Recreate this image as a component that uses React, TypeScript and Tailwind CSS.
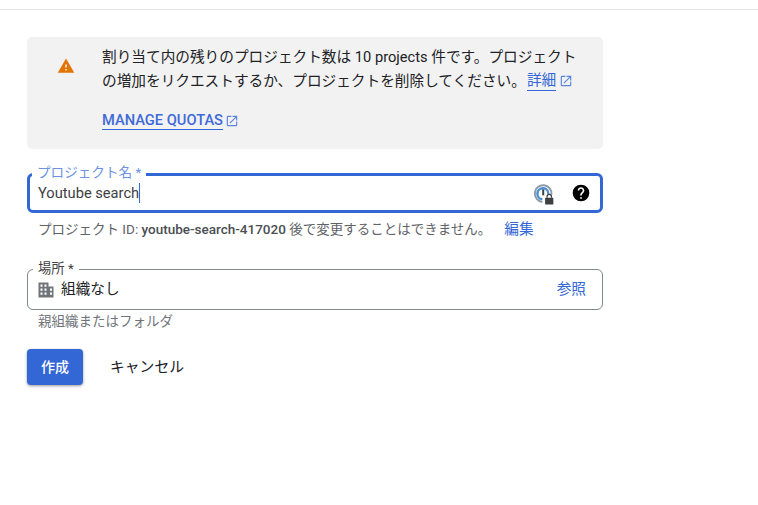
import React from "react";

function ExtLink({ className }: { className?: string }) {
  return (
    <svg viewBox="0 0 24 24" className={className} fill="currentColor">
      <path d="M19 19H5V5h6V3H5a2 2 0 0 0-2 2v14a2 2 0 0 0 2 2h14a2 2 0 0 0 2-2v-6h-2v6zM13 3v2h4.59L7.76 14.83l1.41 1.41L19 6.41V11h2V3h-8z" />
    </svg>
  );
}

export default function App() {
  return (
    <div className="w-[758px] h-[505px] bg-white overflow-hidden font-['Roboto','Noto_Sans_CJK_JP',sans-serif] text-[#202124]">
      <div className="h-[10px] border-b border-[#e5e5e5]" />
      <div className="ml-[27px] w-[576px] pt-[27px]">
        <div className="h-[112px] bg-[#f2f2f2] rounded-[5px] flex">
          <div className="w-[75px] shrink-0 flex justify-center pt-[20px] pl-[2px]">
            <svg viewBox="0 0 24 24" className="w-[18px] h-[18px] text-[#e37400]" fill="currentColor">
              <path d="M1 21h22L12 2 1 21zm12-3h-2v-2h2v2zm0-4h-2v-4h2v4z" />
            </svg>
          </div>
          <div className="pt-[8px] text-[14.67px] leading-[24px] text-[#202124] w-[490px]">
            <div className="whitespace-nowrap">割り当て内の残りのプロジェクト数は 10 projects 件です。プロジェクト</div>
            <div className="whitespace-nowrap flex items-center">
              <span>の増加をリクエストするか、プロジェクトを削除してください。</span>
              <span className="text-[#3367d6] border-b border-[#3367d6] leading-[19px] ml-[1px]">詳細</span>
              <ExtLink className="w-[14px] h-[14px] ml-[3px] text-[#5c85de]" />
            </div>
            <div className="flex items-center mt-[18px]">
              <span className="text-[14.67px] font-medium text-[#3f6ad8] border-b border-[#3367d6] leading-[18px]">MANAGE QUOTAS</span>
              <ExtLink className="w-[14px] h-[14px] ml-[2px] text-[#5c85de]" />
            </div>
          </div>
        </div>

        <div className="relative mt-[24px] h-[40px] border-[3px] border-[#3367d6] rounded-[6px] flex items-center pl-[8px] pr-[9px]">
          <span className="absolute left-[2px] top-[-13px] bg-white px-[5px] text-[13.6px] leading-[18px] text-[#6c93e4]">プロジェクト名 *</span>
          <span className="text-[14.67px] leading-[20px] text-[#3c4043] border-r border-[#3367d6]">Youtube search</span>
          <div className="ml-auto flex items-center gap-[16px] mb-[1px]">
            <svg viewBox="0 0 20 20" className="w-[22px] h-[22px] mt-[2px]">
              <path d="M16.8 10.5A7.6 7.6 0 1 0 8.5 17.2" fill="none" stroke="#8f9ba6" strokeWidth="1.8" />
              <path d="M14 10A5 5 0 1 0 8.5 14.8" fill="none" stroke="#4a90d9" strokeWidth="2.2" />
              <rect x="8.4" y="5.8" width="1.8" height="5.4" fill="#3c4043" />
              <rect x="11" y="13.5" width="7.5" height="6" rx="0.5" fill="#3c4043" />
              <path d="M12.8 13.5v-1.2a2 2 0 0 1 4 0v1.2" fill="none" stroke="#3c4043" strokeWidth="1.1" />
            </svg>
            <svg viewBox="0 0 24 24" className="w-[20px] h-[20px] text-black" fill="currentColor">
              <path d="M12 2a10 10 0 1 0 0 20 10 10 0 0 0 0-20zm1 17h-2v-2h2v2zm2.07-7.75-.9.92C13.45 12.9 13 13.5 13 15h-2v-.5c0-1.1.45-2.1 1.17-2.83l1.24-1.26c.37-.36.59-.86.59-1.41 0-1.1-.9-2-2-2s-2 .9-2 2H8c0-2.21 1.79-4 4-4s4 1.79 4 4c0 .88-.36 1.68-.93 2.25z" />
            </svg>
          </div>
        </div>

        <div className="flex items-center mt-[6px] pl-[11px] text-[13.5px] leading-[20px] text-[#5f6368] whitespace-nowrap">
          <span>プロジェクト ID: <span className="text-[#4a4e52] font-medium">youtube-search-417020</span> 後で変更することはできません。</span>
          <span className="ml-[13px] text-[14.67px] text-[#3367d6]">編集</span>
        </div>

        <div className="relative mt-[30px] h-[41px] border border-[#80868b] rounded-[6px] flex items-center pl-[10px] pr-[16px]">
          <span className="absolute left-[5px] top-[-10px] bg-white px-[5px] text-[13.33px] leading-[18px] text-[#3c4043]">場所 *</span>
          <svg viewBox="0 0 16 16" className="w-[16px] h-[16px] text-[#70757a]" fill="currentColor">
            <path fillRule="evenodd" d="M0.5 0.5h10v4h5v11H0.5V0.5zm2 2v2.2h2V2.500H2.500zm4 0v2.2h2V2.500h-2zm-4 4v2.200h2V6.500h-2zm4 0v2.200h2V6.500h-2zm5.500 0v2.200h2V6.500h-2zm-9.500 4v2.200h2v-2.200h-2zm4 0v2.200h2v-2.200h-2zm5.500 0v2.200h2v-2.200h-2z" />
          </svg>
          <span className="ml-[7px] mb-[1px] text-[14.67px] leading-[20px] text-[#202124]">組織なし</span>
          <span className="ml-auto mb-[2px] text-[14.67px] text-[#3367d6]">参照</span>
        </div>

        <div className="mt-[2px] pl-[11px] text-[13.5px] leading-[18px] text-[#70757a]">親組織またはフォルダ</div>

        <div className="flex items-center mt-[19px]">
          <button className="w-[56px] h-[36px] rounded-[4px] bg-[#3367d6] text-white text-[14px] font-medium shadow-[0_1px_3px_rgba(0,0,0,0.4)]">作成</button>
          <span className="ml-[27px] text-[14.8px] text-[#202124]">キャンセル</span>
        </div>
      </div>
    </div>
  );
}
